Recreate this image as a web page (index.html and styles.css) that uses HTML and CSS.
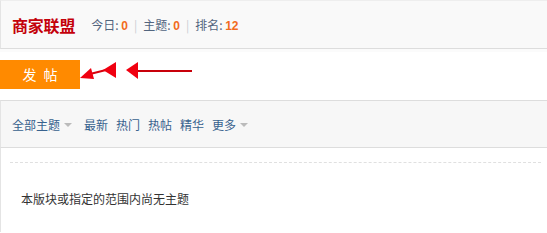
FILE: index.html
```html
<!DOCTYPE html>
<html lang="zh-CN">
<head>
<meta charset="utf-8">
<title>商家联盟</title>
<link rel="stylesheet" href="styles.css">
</head>
<body>
<div class="page">
  <div class="forum-head">
    <h1 class="forum-title">商家联盟</h1>
    <div class="stats">
      <span>今日: <strong class="num">0</strong></span>
      <span class="pipe">|</span>
      <span>主题: <strong class="num">0</strong></span>
      <span class="pipe">|</span>
      <span>排名: <strong class="num">12</strong></span>
    </div>
  </div>
  <div class="post-row">
    <a class="post-btn">发 帖</a>
    <svg class="arrows" width="120" height="30" viewBox="0 0 120 30">
      <line x1="10" y1="15" x2="26" y2="11" stroke="#d8000c" stroke-width="2"/>
      <polygon points="0,19 11,9 14,20" fill="#f00010"/>
      <polygon points="23,11 36,3 36,19" fill="#f00010"/>
      <line x1="55" y1="12" x2="112" y2="12" stroke="#c8000a" stroke-width="2"/>
      <polygon points="46,11 58,3 58,20" fill="#f00010"/>
    </svg>
  </div>
  <div class="toolbar">
    <a class="tb-link">全部主题<span class="caret"></span></a>
    <a class="tb-link gap">最新</a>
    <a class="tb-link">热门</a>
    <a class="tb-link">热帖</a>
    <a class="tb-link">精华</a>
    <a class="tb-link">更多<span class="caret"></span></a>
  </div>
  <div class="list">
    <div class="dash"></div>
    <p class="empty">本版块或指定的范围内尚无主题</p>
  </div>
</div>
</body>
</html>
```
FILE: styles.css
```css
html, body {
  margin: 0;
  padding: 0;
  background: #fff;
}
body {
  font-family: "Noto Sans CJK SC", "Liberation Sans", sans-serif;
  font-size: 12px;
  color: #333;
}
.page {
  width: 547px;
}
.forum-head {
  box-sizing: border-box;
  height: 49px;
  display: flex;
  align-items: center;
  padding-left: 11px;
  background: #f9f9f9;
  border-left: 1px solid #e4e4e4;
  border-bottom: 1px solid #ddd;
  border-top: 1px solid #eee;
}
.forum-title {
  margin: 0 16px 0 0;
  font-size: 16px;
  font-weight: bold;
  color: #c4000a;
  line-height: 20px;
  letter-spacing: -0.2px;
}
.stats {
  display: flex;
  align-items: center;
  gap: 5px;
  color: #52657e;
  font-size: 12px;
  line-height: 16px;
  padding-top: 1px;
}
.num {
  color: #f26c1f;
  font-weight: bold;
  font-family: "Liberation Sans", sans-serif;
}
.pipe {
  color: #c8ccd2;
  margin: 0 1px;
}
.post-row {
  display: flex;
  align-items: center;
  padding: 10px 0 11px;
  background: linear-gradient(#fbfbfb 0, #fbfbfb 3px, #fff 3px);
}
.post-btn {
  display: flex;
  align-items: center;
  justify-content: center;
  width: 80px;
  height: 29px;
  background: #ff8a00;
  color: #fff;
  font-size: 14px;
  letter-spacing: 2px;
  text-indent: 2px;
}
.arrows {
  display: block;
}
.toolbar {
  box-sizing: border-box;
  height: 48px;
  display: flex;
  align-items: center;
  padding-left: 11px;
  padding-top: 1px;
  background: #f7f7f7;
  border-top: 1px solid #ddd;
  border-bottom: 1px solid #ddd;
  border-left: 1px solid #e4e4e4;
}
.tb-link {
  color: #38628e;
  font-size: 12px;
  margin-right: 8px;
  display: flex;
  align-items: center;
}
.tb-link.gap {
  margin-left: 4px;
}
.caret {
  display: inline-block;
  width: 0;
  height: 0;
  margin-left: 4px;
  margin-top: 1px;
  border-left: 4px solid transparent;
  border-right: 4px solid transparent;
  border-top: 4px solid #bbb;
}
.list {
  border-left: 1px solid #e4e4e4;
  padding: 14px 6px 24px 9px;
}
.dash {
  border-top: 1px dashed #e0e0e0;
}
.empty {
  margin: 27px 0 0 11px;
  line-height: 18px;
  color: #333;
}
```
